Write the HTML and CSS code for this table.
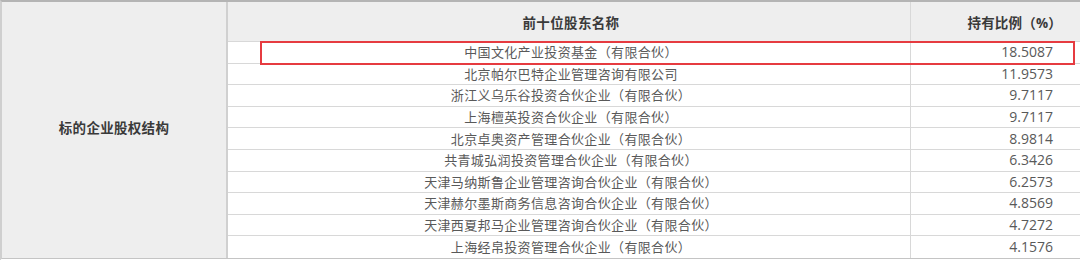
FILE: index.html
```html
<!DOCTYPE html>
<html lang="zh">
<head>
<meta charset="utf-8">
<link rel="stylesheet" href="styles.css">
</head>
<body>
<div class="wrap">
  <div class="holders">
    <div class="cell label">标的企业股权结构</div>
    <div class="cell head name">前十位股东名称</div>
    <div class="cell head pct">持有比例（%）</div>

    <div class="cell name">中国文化产业投资基金（有限合伙）</div><div class="cell pct">18.5087</div>
    <div class="cell name">北京帕尔巴特企业管理咨询有限公司</div><div class="cell pct">11.9573</div>
    <div class="cell name">浙江义乌乐谷投资合伙企业（有限合伙）</div><div class="cell pct">9.7117</div>
    <div class="cell name">上海檀英投资合伙企业（有限合伙）</div><div class="cell pct">9.7117</div>
    <div class="cell name">北京卓奥资产管理合伙企业（有限合伙）</div><div class="cell pct">8.9814</div>
    <div class="cell name">共青城弘润投资管理合伙企业（有限合伙）</div><div class="cell pct">6.3426</div>
    <div class="cell name">天津马纳斯鲁企业管理咨询合伙企业（有限合伙）</div><div class="cell pct">6.2573</div>
    <div class="cell name">天津赫尔墨斯商务信息咨询合伙企业（有限合伙）</div><div class="cell pct">4.8569</div>
    <div class="cell name">天津西夏邦马企业管理咨询合伙企业（有限合伙）</div><div class="cell pct">4.7272</div>
    <div class="cell name last">上海经帛投资管理合伙企业（有限合伙）</div><div class="cell pct last">4.1576</div>
  </div>
  <div class="highlight"></div>
</div>
</body>
</html>
```
FILE: styles.css
```css
html, body {
  margin: 0;
  padding: 0;
  background: #ffffff;
}
body {
  width: 1080px;
  height: 260px;
  overflow: hidden;
  font-family: "Open Sans", "Noto Sans CJK SC", sans-serif;
  font-size: 13px;
  color: #595959;
}
.wrap {
  position: relative;
  width: 1102px;
}
.holders {
  display: grid;
  grid-template-columns: 226px 683px 190px;
  grid-template-rows: 40px repeat(10, 21.6px);
  border-top: 2px solid #b4b4b4;
  border-left: 2px solid #cfcfcf;
  border-bottom: 3px double #c4c4c4;
}
.cell {
  box-sizing: border-box;
  display: flex;
  align-items: center;
  border-right: 1px solid #d8d8d8;
  border-bottom: 1px solid #d8d8d8;
  white-space: nowrap;
  line-height: 20px;
}
.cell.last {
  border-bottom: none;
}
.label {
  grid-row: 1 / span 11;
  justify-content: center;
  background: #eeeeee;
  color: #3a3a3a;
  font-weight: 700;
  font-size: 13.5px;
  letter-spacing: 0.3px;
  border-right: 2px solid #d0d0d0;
  border-bottom: none;
  padding-bottom: 3px;
}
.head {
  background: #eeeeee;
  color: #3a3a3a;
  font-weight: 700;
  font-size: 13.5px;
  letter-spacing: 0.2px;
  padding-top: 2px;
}
.name {
  justify-content: center;
  padding-left: 4px;
  letter-spacing: 0.35px;
}
.pct {
  justify-content: flex-end;
  padding-right: 47px;
  font-size: 14px;
}
.head.pct {
  padding-right: 38px;
  font-size: 13.5px;
}
.highlight {
  position: absolute;
  left: 260px;
  top: 41px;
  width: 811px;
  height: 20px;
  border: 2px solid #e63b40;
  pointer-events: none;
}
```
